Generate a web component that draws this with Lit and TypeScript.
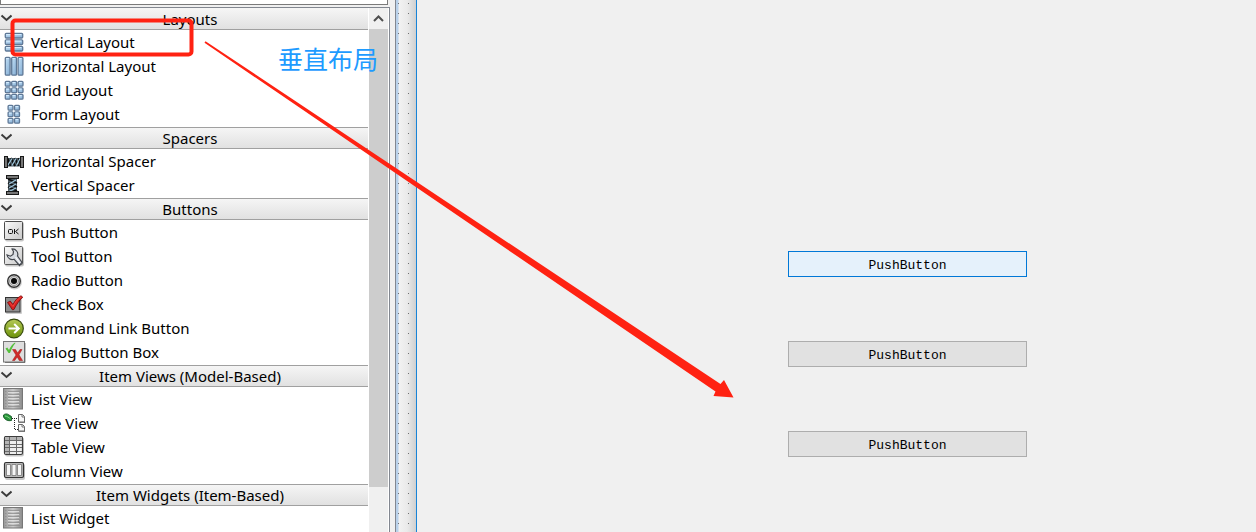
import { LitElement, html, css, svg } from "lit";
import { customElement } from "lit/decorators.js";
import { classMap } from "lit/directives/class-map.js";

const cell = (x: number, y: number, w: number, h: number) => svg`
  <rect x=${x + 0.3} y=${y + 0.3} width=${w - 0.6} height=${h - 0.6} rx="1" fill="url(#glass)" stroke="#5f7896" stroke-width="1.3"/>
  <path d="M${x + 1.2} ${y + 1.6}h${w - 2.8}" stroke="#d8eeff" stroke-width="1"/>`;

const listGlyph = svg`
  <rect x="3.5" y=".5" width="19" height="20.5" fill="url(#slate)" stroke="#777"/>
  <path d="M5 3.5h1.5M5 6.5h1.5M5 9.5h1.5M5 12.5h1.5M5 15.5h1.5M5 18.5h1.5M8 3.5h12M8 6.5h12M8 9.5h12M8 12.5h12M8 15.5h12M8 18.5h12" stroke="#8a8a8a" stroke-width=".7"/>
  <path d="M8 4.5h11M8 7.5h11M8 10.5h11M8 13.5h11M8 16.5h11" stroke="#e2e2e2" stroke-width=".8"/>`;

const glyphs: Record<string, unknown> = {
  vbox: [2, 8.5, 15].map((y) => cell(5, y, 18, 5.3)),
  hbox: [5, 11.4, 17.8].map((x) => cell(x, 2, 5.4, 18.5)),
  grid: [2, 8.5, 15].map((y) => [5, 11.4, 17.8].map((x) => cell(x, y, 5.5, 5.5))),
  form: [2, 8.5, 15].map((y) => [7.8, 14.3].map((x) => cell(x, y, 5.5, 5.5))),
  hspacer: svg`
    <rect x="7" y="8" width="14" height="8.500" fill="#4b5a64"/>
    <path d="M7.500 8l3 8M11 8l4 8M15 8l3.500 8M18.500 8l2.500 7" stroke="#0d0d0d" stroke-width="1.800"/>
    <path d="M8 15l4-6.500M12 15.500l4-7M16.500 15.500l3.500-7" stroke="#a3cbe0" stroke-width="1.200"/>
    <rect x="4.500" y="6.500" width="3" height="11" fill="#777" stroke="#1a1a1a"/>
    <rect x="20.500" y="6.500" width="3" height="11" fill="#777" stroke="#1a1a1a"/>`,
  vspacer: svg`
    <rect x="8" y="4" width="9" height="14" fill="#4b5a64"/>
    <path d="M8 5l9 4M8 9l9 4M8 13l9 4" stroke="#0d0d0d" stroke-width="1.800"/>
    <path d="M9 10l7-4M9 14l7-4M9 17.500l7-3.500" stroke="#a3cbe0" stroke-width="1.200"/>
    <rect x="6.500" y="1.500" width="12" height="3" fill="#777" stroke="#1a1a1a"/>
    <rect x="6.500" y="17.500" width="12" height="3" fill="#777" stroke="#1a1a1a"/>`,
  push: svg`
    <rect x="5" y="1" width="19" height="19.500" rx="2" fill="#000" opacity=".22"/>
    <rect x="4.500" y=".5" width="18" height="18" rx="1" fill="url(#plate)" stroke="#4a4a4a"/>
    <rect x="8.500" y="8.500" width="4" height="4" rx="1" fill="none" stroke="#111"/>
    <path d="M14.500 8v5M18.500 8l-3 2.500 3 2.500" fill="none" stroke="#111"/>`,
  tool: svg`
    <rect x="5" y="2" width="19" height="19.500" rx="2" fill="#000" opacity=".22"/>
    <rect x="4.500" y="1.500" width="18" height="18" rx="1" fill="url(#plate)" stroke="#5a5a5a"/>
    <path d="M12 4a5.300 5.300 0 0 1 5.500 7l4.500 6.500-2.500 3-5.500-6.300a5.300 5.300 0 0 1-7-4.200l3.500 1.200 2.500-1.700.5-3z" fill="#d8dce2" stroke="#43474e" stroke-width="1.200"/>
    <path d="M15.500 12l4.500 6" stroke="#fff"/>`,
  radio: svg`
    <circle cx="14.500" cy="13" r="7.500" fill="#000" opacity=".18"/>
    <circle cx="14" cy="12" r="6.300" fill="#ddd" stroke="#333" stroke-width="1.400"/>
    <circle cx="14" cy="12" r="4.500" fill="none" stroke="#999"/>
    <circle cx="14" cy="12" r="3" fill="#0a0a0a"/>`,
  check: svg`
    <rect x="6" y="6" width="16" height="15" rx="1" fill="#000" opacity=".2"/>
    <rect x="5.500" y="4.500" width="14.500" height="14.500" fill="#8e8e8e" stroke="#333"/>
    <path d="M7.500 9.500l2.700-1.500 2.800 3.500c2-4 4-6.500 8-8.800l1.800 1.600c-4 3.500-6.300 7.200-8.800 12.200l-1.600.3z" fill="#d9201f" stroke="#7c0a0a" stroke-width=".8"/>
    <path d="M9.500 9.500l3.500 4c2-4 4-7 8-9.500" fill="none" stroke="#f0493f" stroke-width=".9"/>`,
  command: svg`
    <circle cx="14" cy="11.500" r="9.300" fill="url(#lime)" stroke="#374a0c" stroke-width="1.200"/>
    <path d="M8.500 11.500h10M14.200 7l4.600 4.500-4.600 4.500" fill="none" stroke="#fff" stroke-width="2"/>`,
  dialog: svg`
    <rect x="3.500" y=".5" width="21" height="20.500" fill="#dedede" stroke="#777"/>
    <path d="M5 21.500h20V2" fill="none" stroke="#555" stroke-width=".7"/>
    <path d="M5.500 7.500l1.800-1 1.700 2.500c1.500-3.500 3-5.500 6-7.500l.5.5c-2.600 3-4 6-5.500 10h-1.500z" fill="#55bf3c"/>
    <path d="M12.500 8.500h3l2.200 3.500 2.300-3.500h2l-3 5.300 3.500 5.700h-3.200l-2.100-3.600-2.500 3.600h-2.200l3.500-5.500z" fill="#d12a2a" stroke="#9c1515" stroke-width=".5"/>`,
  list: listGlyph,
  tree: svg`
    <path d="M3.500 3c1.500-1.500 4-1.500 5.500 0l2.500 1.500v4c-3.500.8-6.500-.5-8-3.500z" fill="#28953b" stroke="#0d4f1c" stroke-width=".8"/>
    <path d="M5 4c2 .2 4 1.500 5.500 3" fill="none" stroke="#8fe08e" stroke-width=".9"/>
    <path d="M12 6.500h6M14.500 8v9.500h4" fill="none" stroke="#222" stroke-dasharray="1 1"/>
    <path d="M18.500 2.500h4l2 2v5.500h-6zM18.500 12.500h4l2 2v4.500h-6z" fill="#f7f7f7" stroke="#666"/>
    <path d="M22 2.500v2.500h2.500M22 12.500v2.500h2.500M18.500 10.500h6.500M18.500 19.500h6.500" fill="none" stroke="#777"/>`,
  table: svg`
    <rect x="5" y="1.500" width="19" height="19" rx="2" fill="#000" opacity=".22"/>
    <rect x="4.500" y=".5" width="18" height="18" rx="1.500" fill="#eee" stroke="#3c3c3c" stroke-width="1.200"/>
    <path d="M5 1h4v17H5zM5 1h17v3H5z" fill="#b4b4b4"/>
    <path d="M9.500 1v17M16.500 1v17M5 4.500h17M5 8.500h17M5 11.500h17M5 15.500h17" stroke="#6a6a6a"/>`,
  column: svg`
    <rect x="5" y="4" width="20" height="16" rx="2" fill="#000" opacity=".22"/>
    <rect x="4.500" y="2.500" width="19" height="15" rx="1.500" fill="#b9b9b9" stroke="#333" stroke-width="1.200"/>
    <path d="M6.500 4.500h4v11h-4zM12 4.500h4v11h-4zM17.500 4.500h4v11h-4z" fill="#f6f6f6" stroke="#777" stroke-width=".8"/>`,
};

const groups = [
  { title: "Layouts", items: [["vbox", "Vertical Layout"], ["hbox", "Horizontal Layout"], ["grid", "Grid Layout"], ["form", "Form Layout"]] },
  { title: "Spacers", items: [["hspacer", "Horizontal Spacer"], ["vspacer", "Vertical Spacer"]] },
  {
    title: "Buttons",
    items: [["push", "Push Button"], ["tool", "Tool Button"], ["radio", "Radio Button"], ["check", "Check Box"], ["command", "Command Link Button"], ["dialog", "Dialog Button Box"]],
  },
  { title: "Item Views (Model-Based)", items: [["list", "List View"], ["tree", "Tree View"], ["table", "Table View"], ["column", "Column View"]] },
  { title: "Item Widgets (Item-Based)", items: [["list", "List Widget"]] },
];

@customElement("widget-box")
export class WidgetBox extends LitElement {
  static styles = css`
    :host { display: flex; flex-direction: column; width: 390px; height: 100%; box-sizing: border-box; background: #f0f0f0; color: #000; font: 15px/22px "Noto Sans", "Open Sans", sans-serif; }
    .filter { flex: none; display: block; box-sizing: border-box; width: 388px; height: 24px; margin: -19px 0 2px; border: 1px solid #7a7a7a; padding: 0 4px; background: #fff; font: inherit; }
    .frame { flex: 1; min-height: 0; display: flex; border-top: 1px solid #828790; border-right: 1px solid #828790; background: #fff; overflow: hidden; }
    .groups { flex: 1; min-width: 0; overflow: hidden; }
    .head { display: flex; align-items: center; box-sizing: border-box; width: 100%; height: 22px; margin: 0 0 1px; padding: 0; border: 0; border-top: 1px solid #a0a0a0; border-bottom: 1px solid #a0a0a0; background: linear-gradient(#f5f5f5, #e1e1e1); font: inherit; line-height: 20px; color: inherit; }
    .first { border-top-color: #f5f5f5; }
    .chev { flex: none; width: 12px; height: 20px; }
    .title { flex: 1; text-align: center; }
    .items { list-style: none; margin: 0; padding: 0; }
    .item { display: flex; gap: 3px; height: 24px; white-space: nowrap; }
    .icon { flex: none; width: 28px; height: 24px; }
    .bar { flex: none; width: 19px; margin: 0 1px; background: #f0f0f0; display: flex; flex-direction: column; }
    .up { display: block; border: 0; padding: 0; width: 19px; height: 21px; background: #f0f0f0; }
    .thumb { height: 458px; background: #cdcdcd; }
  `;

  // Gradients have to live in every SVG that refers to them inside a shadow tree.
  private gradients() {
    return svg`<defs>
      <linearGradient id="glass" x1="0" y1="0" x2="1" y2="1"><stop offset="0" stop-color="#c3e0f7"/><stop offset="1" stop-color="#83acd2"/></linearGradient>
      <linearGradient id="slate"><stop offset="0" stop-color="#989898"/><stop offset=".5" stop-color="#cacaca"/><stop offset="1" stop-color="#8a8a8a"/></linearGradient>
      <linearGradient id="plate" x1="0" y1="0" x2="1" y2="1"><stop offset="0" stop-color="#fafafa"/><stop offset="1" stop-color="#c9c9c9"/></linearGradient>
      <linearGradient id="lime" x1="0" y1="0" x2="0" y2="1"><stop offset="0" stop-color="#b5c957"/><stop offset="1" stop-color="#6d9209"/></linearGradient>
    </defs>`;
  }

  render() {
    return html`
      <input class="filter" type="text" aria-label="Filter" />
      <div class="frame">
        <div class="groups">
          ${groups.map(
            (g, i) => html`<section>
              <button class=${classMap({ head: true, first: i === 0 })} aria-expanded="true">
                <svg class="chev" viewBox="0 0 12 20"><path d="M1.500 6.500l5 4.500 5-4.500" fill="none" stroke="#3c3c3c" stroke-width="2"/></svg>
                <span class="title">${g.title}</span>
              </button>
              <ul class="items">
                ${g.items.map(
                  ([icon, label]) => html`<li class="item">
                    <svg class="icon" viewBox="0 0 28 24">${this.gradients()}${glyphs[icon]}</svg><span>${label}</span>
                  </li>`
                )}
              </ul>
            </section>`
          )}
        </div>
        <div class="bar">
          <button class="up" aria-label="Scroll up">
            <svg width="19" height="21" viewBox="0 0 19 21"><path d="M5 13l4.500-4.500L14 13" fill="none" stroke="#505050" stroke-width="2"/></svg>
          </button>
          <div class="thumb"></div>
        </div>
      </div>
    `;
  }
}

@customElement("form-canvas")
export class FormCanvas extends LitElement {
  static styles = css`
    :host { display: grid; grid-template-columns: 371fr 239px 229fr; align-content: start; row-gap: 64px; padding-top: 251px; background: #f0f0f0; }
    .push { grid-column: 2; box-sizing: border-box; height: 26px; padding: 4px 0 0; border: 1px solid #adadad; background: #e1e1e1; color: #000; font: 13px/20px "Liberation Mono", monospace; }
    .active { border-color: #0078d7; background: #e5f1fb; }
  `;
  render() {
    return [true, false, false].map((active) => html`<button class=${classMap({ push: true, active })}>PushButton</button>`);
  }
}

@customElement("app-root")
export class AppRoot extends LitElement {
  static styles = css`
    :host { display: flex; position: relative; height: 100vh; overflow: hidden; background: #f0f0f0; }
    .box { flex: none; }
    .gutter { flex: none; width: 5px; }
    .edge { flex: none; box-sizing: border-box; display: flex; width: 22px; border-left: 1px solid #828790; border-right: 1px solid #1883d7; background: linear-gradient(90deg, #b9d1ea 0 2px, #f2f2f2 3px, #eaeaea 11px, #d0d0d0 20px); }
    .dots { flex: 1; }
    .marks { position: absolute; top: 0; left: 0; pointer-events: none; }
    .canvas { flex: 1; min-width: 0; }
    .note { position: absolute; top: 40px; left: 278px; margin: 0; color: #1e9bff; font: 25px/36px "Noto Sans CJK SC", sans-serif; white-space: nowrap; }
  `;
  render() {
    return html`
      <widget-box class="box"></widget-box>
      <div class="gutter"></div>
      <div class="edge">
        <svg class="dots" width="20" height="100%" aria-hidden="true">
          <defs><pattern id="dot" width="10" height="10" patternUnits="userSpaceOnUse"><rect x="2" y="3" width="1" height="1" fill="#707070"/></pattern></defs>
          <rect width="20" height="100%" fill="url(#dot)"/>
        </svg>
      </div>
      <form-canvas class="canvas"></form-canvas>
      <svg class="marks" width="760" height="420" viewBox="0 0 760 420" aria-hidden="true">
        <rect x="12.500" y="20.500" width="179" height="34" rx="3" fill="none" stroke="#ff2212" stroke-width="4"/>
        <path d="M205.500 41.200l515 342.800 3.500-4 9.500 17.500-20-1.500 2-4.500L204.500 42.800z" fill="#ff2212"/>
      </svg>
      <p class="note">垂直布局</p>
    `;
  }
}
